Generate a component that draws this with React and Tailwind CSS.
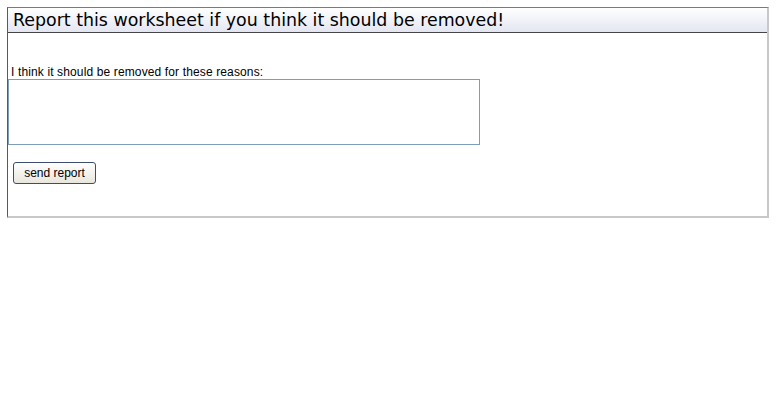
export default function App() {
  return (
    <div className="bg-white w-[778px] h-[400px] pt-[7px] pl-[7px]" style={{ fontFamily: '"Liberation Sans", Arial, sans-serif' }}>
      <div className="w-[762px] h-[211px] border-t border-l border-t-[#7a7a7a] border-l-[#5a5a5a] border-r-2 border-b-2 border-r-[#c8c8c8] border-b-[#c8c8c8] flex flex-col">
        <div className="h-[25px] border-b border-[#454545] bg-gradient-to-b from-[#ffffff] to-[#e3e6f2] pl-[5px] flex items-center">
          <span className="text-[17.4px] leading-[22px] text-black" style={{ fontFamily: '"DejaVu Sans", Verdana, sans-serif' }}>Report this worksheet if you think it should be removed!</span>
        </div>
        <div className="flex flex-col">
          <div className="h-[32px]" />
          <div className="pl-[3px] text-[12px] leading-[14px] tracking-[0.13px] text-black">I think it should be removed for these reasons:</div>
          <textarea className="w-[472px] h-[66px] border border-[#7f9db9] resize-none outline-none" />
          <div className="h-[17px]" />
          <div className="pl-[5px] flex">
            <button className="w-[83px] h-[22px] rounded-[3px] border border-[#3c4e6e] bg-gradient-to-b from-[#ffffff] to-[#e8e6dc] text-[12px] leading-[14px] text-black">send report</button>
          </div>
        </div>
      </div>
    </div>
  );
}
